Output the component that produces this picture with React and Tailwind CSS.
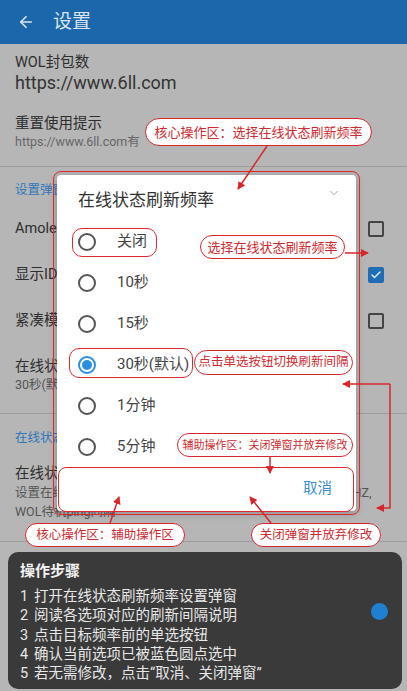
import { ArrowLeft, ChevronDown, Check } from 'lucide-react';

function Pill({ pos, text, size }) {
  return (
    <div
      className={`absolute ${pos} flex items-center justify-center rounded-full border-[1.5px] border-[#d8262c] bg-white text-[#cf2a2f] ${size} leading-none whitespace-nowrap`}
    >
      {text}
    </div>
  );
}

function Frame({ pos, radius }) {
  return <div className={`absolute ${pos} ${radius} border-[1.5px] border-[#dc2a2e]`} />;
}

function Radio({ label, checked }) {
  return (
    <div className="flex h-[41px] items-center">
      <div className="flex w-[60px] justify-center">
        {checked ? (
          <div className="flex h-[18px] w-[18px] items-center justify-center rounded-full border-2 border-[#2a8fe0]">
            <div className="h-[10px] w-[10px] rounded-full bg-[#2a8fe0]" />
          </div>
        ) : (
          <div className="h-[18px] w-[18px] rounded-full border-2 border-[#555555]" />
        )}
      </div>
      <div className="text-[15px] text-[#444444]">{label}</div>
    </div>
  );
}

function CheckRow({ label, checked }) {
  return (
    <div className="flex h-[46px] items-center justify-between pl-[15px] pr-[23px]">
      <div className="text-[14.5px] text-[#2e2e2e]">{label}</div>
      {checked ? (
        <div className="flex h-[16px] w-[16px] items-center justify-center rounded-[2px] bg-[#1f6db5]">
          <Check size={12} strokeWidth={3} color="#dfe9f3" />
        </div>
      ) : (
        <div className="h-[16px] w-[16px] rounded-[2px] border-2 border-[#444444]" />
      )}
    </div>
  );
}

export default function App() {
  const steps = [
    '打开在线状态刷新频率设置弹窗',
    '阅读各选项对应的刷新间隔说明',
    '点击目标频率前的单选按钮',
    '确认当前选项已被蓝色圆点选中',
    '若无需修改，点击“取消、关闭弹窗”',
  ];
  return (
    <div className="relative h-[691px] w-[407px] overflow-hidden bg-[#b6b6b6] font-['Roboto','Noto_Sans_CJK_SC',sans-serif]">
      {/* Header */}
      <div className="flex h-[44px] items-center bg-[#1c66ac] pl-[17px]">
        <ArrowLeft size={18} strokeWidth={2.2} color="#dbe5ef" />
        <div className="ml-[18px] text-[19px] text-[#dbe5ef]">设置</div>
      </div>

      {/* Block 1 */}
      <div className="border-b border-[#9c9c9c] px-[15px] pb-[16px] pt-[10px]">
        <div className="text-[14.5px] leading-[18px] text-[#2e2e2e]">WOL封包数</div>
        <div className="text-[18px] leading-[22px] text-[#333333]">https://www.6ll.com</div>
        <div className="mt-[20px] text-[14.5px] leading-[20px] text-[#2e2e2e]">重置使用提示</div>
        <div className="text-[12.5px] leading-[16px] text-[#666666]">https://www.6ll.com有</div>
      </div>

      {/* Section 2 */}
      <div className="border-b border-[#9c9c9c] pb-[20px] pt-[15px]">
        <div className="px-[15px] text-[12.5px] leading-[16px] text-[#2f77ba]">设置弹窗</div>
        <div className="mt-[8px]">
          <CheckRow label="Amoled模式" />
          <CheckRow label="显示ID" checked />
          <CheckRow label="紧凑模式" />
        </div>
        <div className="px-[15px] pt-[13px]">
          <div className="text-[14.5px] leading-[20px] text-[#2e2e2e]">在线状态刷新频率</div>
          <div className="text-[12.5px] leading-[16px] text-[#555555]">30秒(默认)</div>
        </div>
      </div>

      {/* Section 3 */}
      <div className="border-b border-[#9c9c9c] px-[15px] pb-[19px] pt-[16px]">
        <div className="text-[12.5px] leading-[16px] text-[#2f77ba]">在线状态</div>
        <div className="mt-[18px] text-[14.5px] leading-[20px] text-[#2e2e2e]">在线状态检测</div>
        <div className="whitespace-nowrap text-[12.5px] leading-[18px] text-[#555555]">设置在线状态检测的间隔时间，数值越小越耗电，单位为赫兹HZ,</div>
        <div className="text-[12.5px] leading-[20px] text-[#555555]">WOL待机ping间隔</div>
      </div>

      {/* Dialog */}
      <div className="absolute left-[57px] top-[175px] flex h-[336px] w-[299px] flex-col rounded-[4px] bg-white shadow-[0_2px_8px_rgba(0,0,0,0.25)]">
        <div className="relative flex h-[46px] items-center pl-[21px] pt-[6px]">
          <div className="text-[17px] text-[#333333]">在线状态刷新频率</div>
          <ChevronDown size={14} strokeWidth={1.5} color="#9a9a9a" className="absolute right-[15px] top-[11px]" />
        </div>
        <Radio label="关闭" />
        <Radio label="10秒" />
        <Radio label="15秒" />
        <Radio label="30秒(默认)" checked />
        <Radio label="1分钟" />
        <Radio label="5分钟" />
        <div className="flex flex-1 items-center justify-end pr-[24px]">
          <div className="text-[14.5px] text-[#3a8ed0]">取消</div>
        </div>
      </div>

      {/* Annotation frames */}
      <Frame pos="left-[53px] top-[171px] w-[307px] h-[344px]" radius="rounded-[8px]" />
      <Frame pos="left-[72px] top-[228px] w-[85px] h-[29px]" radius="rounded-[10px]" />
      <Frame pos="left-[69px] top-[348px] w-[124px] h-[30px]" radius="rounded-[10px]" />
      <Frame pos="left-[58px] top-[467px] w-[296px] h-[45px]" radius="rounded-[8px]" />

      {/* Pills */}
      <Pill pos="left-[145px] top-[118px] w-[227px] h-[28px]" text="核心操作区：选择在线状态刷新频率" size="text-[13px]" />
      <Pill pos="left-[200px] top-[235px] w-[145px] h-[24px]" text="选择在线状态刷新频率" size="text-[13px]" />
      <Pill pos="left-[194px] top-[350px] w-[159px] h-[25px]" text="点击单选按钮切换刷新间隔" size="text-[12.5px]" />
      <Pill pos="left-[177px] top-[433px] w-[176px] h-[24px]" text="辅助操作区：关闭弹窗并放弃修改" size="text-[11px]" />
      <Pill pos="left-[25px] top-[523px] w-[160px] h-[24px]" text="核心操作区：辅助操作区" size="text-[12.5px]" />
      <Pill pos="left-[251px] top-[523px] w-[130px] h-[24px]" text="关闭弹窗并放弃修改" size="text-[12.5px]" />

      {/* Arrows */}
      <svg className="pointer-events-none absolute left-0 top-0" width="407" height="691">
        <defs>
          <marker id="ah" markerWidth="8" markerHeight="8" refX="7" refY="4" orient="auto" markerUnits="userSpaceOnUse">
            <path d="M0,0 L8,4 L0,8 Z" fill="#d8262c" />
          </marker>
        </defs>
        <g stroke="#d8262c" strokeWidth="1.5" fill="none">
          <line x1="267" y1="146" x2="238" y2="189" markerEnd="url(#ah)" />
          <line x1="345" y1="253" x2="368" y2="253" markerEnd="url(#ah)" />
          <path d="M390 384 H343" markerEnd="url(#ah)" />
          <path d="M390 384 V508 H377" markerEnd="url(#ah)" />
          <line x1="270" y1="457" x2="270" y2="473" markerEnd="url(#ah)" />
          <line x1="110" y1="523" x2="119" y2="497" markerEnd="url(#ah)" />
          <line x1="271" y1="523" x2="250" y2="497" markerEnd="url(#ah)" />
        </g>
      </svg>

      {/* Steps panel */}
      <div className="absolute left-[8px] top-[552px] h-[137px] w-[394px] rounded-[10px] bg-[#3a3a3a] pl-[12px] pt-[9px]">
        <div className="text-[15px] font-bold leading-[20px] text-[#f2f2f2]">操作步骤</div>
        <div className="mt-[6px]">
          {steps.map((s, i) => (
            <div key={i} className="flex text-[14.5px] leading-[19.3px] text-[#e8e8e8]">
              <span className="w-[14px]">{i + 1}</span>
              <span>{s}</span>
            </div>
          ))}
        </div>
        <div className="absolute left-[363px] top-[51px] h-[17px] w-[17px] rounded-full bg-[#1f7fd0]" />
      </div>
    </div>
  );
}
